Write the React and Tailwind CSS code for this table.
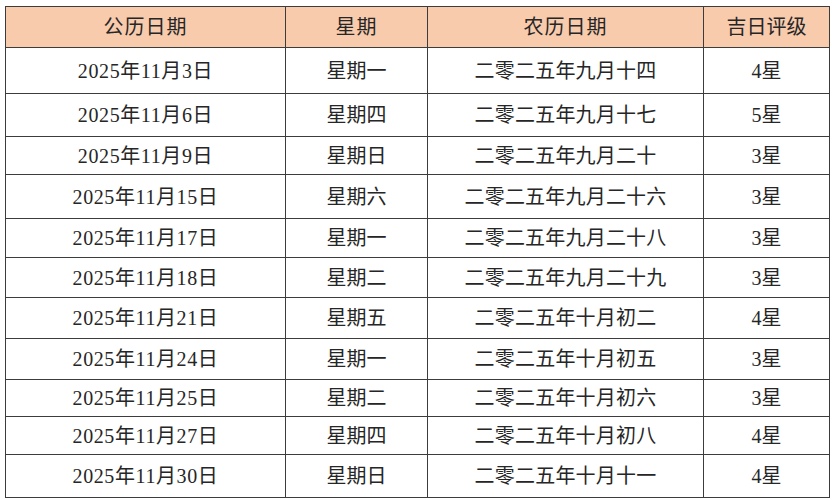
import React from 'react';

const rows = [
  { solar: '2025年11月3日', week: '星期一', lunar: '二零二五年九月十四', star: '4星', h: 'h-[46px]' },
  { solar: '2025年11月6日', week: '星期四', lunar: '二零二五年九月十七', star: '5星', h: 'h-[43px]' },
  { solar: '2025年11月9日', week: '星期日', lunar: '二零二五年九月二十', star: '3星', h: 'h-[38px]' },
  { solar: '2025年11月15日', week: '星期六', lunar: '二零二五年九月二十六', star: '3星', h: 'h-[44px]' },
  { solar: '2025年11月17日', week: '星期一', lunar: '二零二五年九月二十八', star: '3星', h: 'h-[39px]' },
  { solar: '2025年11月18日', week: '星期二', lunar: '二零二五年九月二十九', star: '3星', h: 'h-[40px]' },
  { solar: '2025年11月21日', week: '星期五', lunar: '二零二五年十月初二', star: '4星', h: 'h-[41px]' },
  { solar: '2025年11月24日', week: '星期一', lunar: '二零二五年十月初五', star: '3星', h: 'h-[41px]' },
  { solar: '2025年11月25日', week: '星期二', lunar: '二零二五年十月初六', star: '3星', h: 'h-[37px]' },
  { solar: '2025年11月27日', week: '星期四', lunar: '二零二五年十月初八', star: '4星', h: 'h-[38px]' },
  { solar: '2025年11月30日', week: '星期日', lunar: '二零二五年十月十一', star: '4星', h: 'h-[43px]' },
];

const cell = 'border border-[#3c3c3c] text-center align-middle p-0';

export default function App() {
  return (
    <div
      className="w-[832px] h-[500px] bg-white pt-[6px] pl-[5px] text-[20px] leading-none text-[#262626]"
      style={{ fontFamily: '"Liberation Serif", "Noto Sans CJK SC", serif' }}
    >
      <table className="border-collapse table-fixed w-[824px]">
        <colgroup>
          <col className="w-[280px]" />
          <col className="w-[142px]" />
          <col className="w-[276px]" />
          <col className="w-[126px]" />
        </colgroup>
        <thead>
          <tr className="h-[41px] bg-[#f8cbad]">
            <th className={`${cell} font-normal tracking-[1px]`}>公历日期</th>
            <th className={`${cell} font-normal tracking-[1px]`}>星期</th>
            <th className={`${cell} font-normal tracking-[1px]`}>农历日期</th>
            <th className={`${cell} font-normal`}>吉日评级</th>
          </tr>
        </thead>
        <tbody>
          {rows.map((r) => (
            <tr key={r.solar} className={r.h}>
              <td className={`${cell} tracking-[0.6px]`}>{r.solar}</td>
              <td className={cell}>{r.week}</td>
              <td className={`${cell} tracking-[0.2px]`}>{r.lunar}</td>
              <td className={cell}>{r.star}</td>
            </tr>
          ))}
        </tbody>
      </table>
    </div>
  );
}
